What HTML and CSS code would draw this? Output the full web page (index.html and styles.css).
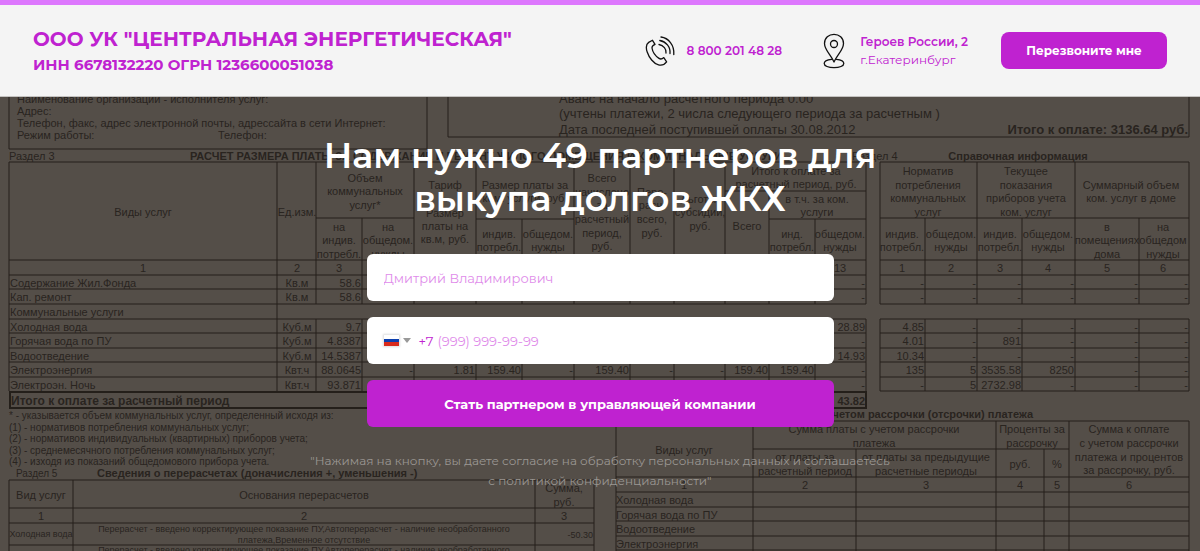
FILE: index.html
```html
<!DOCTYPE html>
<html lang="ru">
<head>
    <meta charset="UTF-8">
    <meta name="viewport" content="width=device-width, initial-scale=1.0">
    <title>ООО УК "Центральная Энергетическая"</title>
    <link rel="stylesheet" href="styles.css">
</head>
<body>
    <header class="header">
        <div class="brand">
            <p class="brand-name">ООО УК "ЦЕНТРАЛЬНАЯ ЭНЕРГЕТИЧЕСКАЯ"</p>
            <p class="brand-info">ИНН 6678132220 ОГРН 1236600051038</p>
        </div>
        <div class="contacts">
            <a class="contact" href="tel:88002014828">
                <svg class="icon-phone" viewBox="0 0 30 30" aria-hidden="true">
                    <path d="M7.500 4.300 L3.700 6.400 C1.400 8 0.700 11.500 2.200 16 C4 21.500 8.500 27.500 13.500 28.900 C16.500 29.700 19.800 28.300 21.600 25.900 L18.800 21.600 C17.500 22.800 15.500 23.400 14 22.400 C10.500 20 7.500 15.500 7 12 C6.900 10.500 8.300 9.200 10 8.400 Z"/>
                    <path d="M16 1 C23.500 2 29.500 9 28.800 18.500 M14.800 4.500 C21 5.500 25.600 11 25 17.500 M14 8.500 C18.500 9.300 21.600 13 21 17"/>
                </svg>
                <b>8 800 201 48 28</b>
            </a>
            <div class="contact">
                <svg class="icon-pin" viewBox="0 0 22 36" aria-hidden="true">
                    <path d="M11 29 C8 22 1.500 17 1.500 10.500 C1.500 5 5.800 1.300 11 1.300 C16.200 1.300 20.500 5 20.500 10.500 C20.500 17 14 22 11 29 Z"/>
                    <circle cx="11" cy="11" r="3.500"/>
                    <path d="M8.600 26.300 C4 26.700 1.200 28.300 1.200 30.400 C1.200 32.900 5.300 34.700 11 34.700 C16.700 34.700 20.800 32.900 20.800 30.400 C20.800 28.300 18 26.700 13.400 26.300"/>
                </svg>
                <p class="address"><b>Героев России, 2</b><br>г.Екатеринбург</p>
            </div>
            <button class="call-button" type="button">Перезвоните мне</button>
        </div>
    </header>

    <main class="hero">
        <!-- Фон: квитанция за ЖКХ -->
        <svg class="bill" viewBox="0 97 1200 454" preserveAspectRatio="xMidYMin slice" aria-hidden="true">
            <g class="lines">
                <!-- шапка -->
                <path d="M9 97V149H427V97 M448 97V137H1189V97"/>
                <!-- раздел 3 -->
                <path d="M9 162H866 M316 218H414 M476 219H574 M725 191H866 M769 219H866 M9 260H866 M9 275H866 M9 289H866 M9 304H866 M9 319H866 M9 333H866 M9 348H866 M9 362H866 M9 377H866"/>
                <path d="M9 162V391 M277 162V391 M316 162V304 M316 319V391 M362 218V304 M362 319V391 M414 162V304 M414 319V391 M476 162V304 M476 319V391 M522 219V304 M522 319V391 M574 162V304 M574 319V391 M630 162V304 M630 319V391 M674 162V304 M674 319V391 M725 162V304 M725 319V391 M769 191V304 M769 319V391 M815 219V304 M815 319V391 M866 162V304 M866 319V391"/>
                <!-- раздел 4 -->
                <path d="M880 162H1189 M880 218H1189 M880 260H1189 M880 275H1189 M880 289H1189 M880 304H1189 M880 319H1189 M880 333H1189 M880 348H1189 M880 362H1189 M880 377H1189 M880 391H1189"/>
                <path d="M880 162V304 M880 319V391 M925 218V304 M925 319V391 M977 162V304 M977 319V391 M1022 218V304 M1022 319V391 M1075 162V304 M1075 319V391 M1139 218V304 M1139 319V391 M1189 162V304 M1189 319V391"/>
                <!-- раздел 5 -->
                <path d="M9 551V480H594V551 M9 508H594 M9 523H594 M9 545H594 M73 480V551 M535 480V551"/>
                <!-- рассрочка -->
                <path d="M616 551V421H1189V551 M753 449H1069 M616 477H1189 M616 492H1189 M616 507H1189 M616 521H1189 M616 536H1189 M616 550H1189 M753 421V551 M856 449V551 M996 421V551 M1044 449V551 M1069 421V551"/>
                <rect class="total" x="10" y="392" width="856" height="16"/>
            </g>

            <g class="t11">
                <text x="17" y="103">Наименование организации - исполнителя услуг:</text>
                <text x="17" y="115">Адрес:</text>
                <text x="17" y="127">Телефон, факс, адрес электронной почты, адрессайта в сети Интернет:</text>
                <text x="17" y="139">Режим работы:</text>
                <text x="218" y="139">Телефон:</text>
                <text x="9" y="160">Раздел 3</text>
                <text x="852" y="160">Раздел 4</text>
                <text class="b" x="190" y="160">РАСЧЕТ РАЗМЕРА ПЛАТЫ ЗА СОДЕРЖАНИЕ И РЕМОНТ ЖИЛОГО ПОМЕЩЕНИЯ И КОММУНАЛЬНЫЕ УСЛУГИ</text>
                <text class="b mid" x="1018" y="160">Справочная информация</text>
            </g>
            <g class="t13">
                <text x="559" y="103">Аванс на начало расчетного периода 0.00</text>
                <text x="559" y="118">(учтены платежи, 2 числа следующего периода за расчетным )</text>
                <text x="559" y="134">Дата последней поступившей оплаты 30.08.2012</text>
                <text class="b end" x="1188" y="134">Итого к оплате: 3136.64 руб.</text>
            </g>

            <g class="t11 mid">
                <text x="143" y="216">Виды услуг</text>
                <text x="297" y="216">Ед.изм.</text>
                <text x="365" y="182">Объем</text><text x="365" y="195">коммунальных</text><text x="365" y="209">услуг*</text>
                <text x="339" y="231">на</text><text x="339" y="244">индив.</text><text x="339" y="258">потребл.</text>
                <text x="388" y="231">на</text><text x="388" y="244">общедом.</text><text x="388" y="258">нужды</text>
                <text x="445" y="189">Тариф</text><text x="445" y="217">Размер</text><text x="445" y="230">платы на</text><text x="445" y="243">кв.м, руб.</text>
                <text x="525" y="189">Размер платы за</text><text x="525" y="202">ком. услуги, руб.</text>
                <text x="499" y="238">индив.</text><text x="499" y="251">потребл.</text>
                <text x="548" y="238">общедом.</text><text x="548" y="251">нужды</text>
                <text x="602" y="182">Всего</text><text x="602" y="196">начислено</text><text x="602" y="209">за</text><text x="602" y="223">расчетный</text><text x="602" y="237">период,</text><text x="602" y="250">руб.</text>
                <text x="652" y="196">Пере-</text><text x="652" y="209">расч.</text><text x="652" y="223">всего,</text><text x="652" y="237">руб.</text>
                <text x="700" y="203">Льготы,</text><text x="700" y="216">субсидии,</text><text x="700" y="230">руб.</text>
                <text x="796" y="175">Итого к оплате за</text><text x="796" y="188">расчетный период, руб.</text>
                <text x="747" y="230">Всего</text>
                <text x="817" y="203">в т.ч. за ком.</text><text x="817" y="216">услуги</text>
                <text x="792" y="238">инд.</text><text x="792" y="251">потребл.</text>
                <text x="840" y="238">общедом.</text><text x="840" y="251">нужды</text>
                <text x="143" y="272">1</text><text x="297" y="272">2</text><text x="339" y="272">3</text><text x="840" y="272">13</text>

                <text x="928" y="175">Норматив</text><text x="928" y="189">потребления</text><text x="928" y="202">коммунальных</text><text x="928" y="216">услуг</text>
                <text x="1026" y="175">Текущее</text><text x="1026" y="189">показания</text><text x="1026" y="202">приборов учета</text><text x="1026" y="216">ком. услуг</text>
                <text x="1131" y="189">Суммарный объем</text><text x="1131" y="202">ком. услуг в доме</text>
                <text x="902" y="238">индив.</text><text x="902" y="251">потребл.</text>
                <text x="951" y="238">общедом.</text><text x="951" y="251">нужды</text>
                <text x="1000" y="238">индив.</text><text x="1000" y="251">потребл.</text>
                <text x="1048" y="238">общедом.</text><text x="1048" y="251">нужды</text>
                <text x="1107" y="231">в</text><text x="1107" y="244">помещениях</text><text x="1107" y="258">дома</text>
                <text x="1163" y="231">на</text><text x="1163" y="244">общедом</text><text x="1163" y="258">нужды</text>
                <text x="902" y="272">1</text><text x="951" y="272">2</text><text x="1000" y="272">3</text><text x="1048" y="272">4</text><text x="1107" y="272">5</text><text x="1163" y="272">6</text>

                <text x="297" y="287">Кв.м</text><text x="297" y="301">Кв.м</text><text x="297" y="331">Куб.м</text><text x="297" y="345">Куб.м</text><text x="297" y="360">Куб.м</text><text x="297" y="374">Квт.ч</text><text x="297" y="389">Квт.ч</text>
            </g>

            <g class="t11">
                <text x="10" y="287">Содержание Жил.Фонда</text>
                <text x="10" y="301">Кап. ремонт</text>
                <text x="10" y="316">Коммунальные услуги</text>
                <text x="10" y="331">Холодная вода</text>
                <text x="10" y="345">Горячая вода по ПУ</text>
                <text x="10" y="360">Водоотведение</text>
                <text x="10" y="374">Электроэнергия</text>
                <text x="10" y="389">Электроэн. Ночь</text>
            </g>
            <text class="t12 b" x="11" y="405">Итого к оплате за расчетный период</text>

            <g class="t11 end">
                <text x="361" y="287">58.6</text><text x="361" y="301">58.6</text><text x="361" y="331">9.7</text><text x="361" y="345">4.8387</text><text x="361" y="360">14.5387</text><text x="361" y="374">88.0645</text><text x="361" y="389">93.871</text>
                <text x="475" y="301">7.20</text><text x="521" y="301">219.86</text><text x="629" y="301">219.86</text><text x="768" y="301">219.86</text><text x="814" y="301">219.86</text>
                <text x="413" y="374">-</text><text x="475" y="374">1.81</text><text x="521" y="374">159.40</text><text x="573" y="374">-</text><text x="629" y="374">159.40</text><text x="673" y="374">-</text><text x="724" y="374">-</text><text x="768" y="374">159.40</text><text x="814" y="374">159.40</text>
                <text x="865" y="287">-</text><text x="865" y="301">-</text><text x="865" y="331">28.89</text><text x="865" y="345">-</text><text x="865" y="360">14.93</text><text x="865" y="374">-</text><text x="865" y="389">-</text>
                <text class="b" x="865" y="405">43.82</text>

                <text x="924" y="287">-</text><text x="976" y="287">-</text><text x="1021" y="287">-</text><text x="1074" y="287">-</text><text x="1138" y="287">-</text><text x="1188" y="287">-</text>
                <text x="924" y="301">-</text><text x="976" y="301">-</text><text x="1021" y="301">-</text><text x="1074" y="301">-</text><text x="1138" y="301">-</text><text x="1188" y="301">-</text>
                <text x="924" y="331">4.85</text><text x="976" y="331">-</text><text x="1021" y="331">-</text><text x="1074" y="331">-</text><text x="1138" y="331">-</text><text x="1188" y="331">-</text>
                <text x="924" y="345">4.01</text><text x="976" y="345">-</text><text x="1021" y="345">891</text><text x="1074" y="345">-</text><text x="1138" y="345">-</text><text x="1188" y="345">-</text>
                <text x="924" y="360">10.34</text><text x="976" y="360">-</text><text x="1021" y="360">-</text><text x="1074" y="360">-</text><text x="1138" y="360">-</text><text x="1188" y="360">-</text>
                <text x="924" y="374">135</text><text x="976" y="374">5</text><text x="1021" y="374">3535.58</text><text x="1074" y="374">8250</text><text x="1138" y="374">-</text><text x="1188" y="374">-</text>
                <text x="924" y="389">-</text><text x="976" y="389">5</text><text x="1021" y="389">2732.98</text><text x="1074" y="389">-</text><text x="1138" y="389">-</text><text x="1188" y="389">-</text>
            </g>

            <g class="t10">
                <text x="9" y="419">* - указывается объем коммунальных услуг, определенный исходя из:</text>
                <text x="9" y="431">(1) - нормативов потребления коммунальных услуг;</text>
                <text x="9" y="442">(2) - нормативов индивидуальных (квартирных) приборов учета;</text>
                <text x="9" y="454">(3) - среднемесячного потребления коммунальных услуг;</text>
                <text x="9" y="465">(4) - изходя из показаний общедомового прибора учета.</text>
                <text x="16" y="477">Раздел 5</text>
            </g>
            <text class="t11 b" x="97" y="477">Сведения о перерасчетах (доначисления +, уменьшения -)</text>
            <g class="t11 mid">
                <text x="41" y="499">Вид услуг</text><text x="304" y="499">Основания перерасчетов</text>
                <text x="564" y="492">Сумма,</text><text x="564" y="506">руб.</text>
                <text x="41" y="520">1</text><text x="304" y="520">2</text><text x="564" y="520">3</text>
            </g>
            <g class="t9 mid">
                <text x="41" y="537">Холодная вода</text>
                <text x="304" y="532">Перерасчет - введено корректирующее показание ПУ,Автоперерасчет - наличие необработанного</text>
                <text x="304" y="543">платежа,Временное отсутствие</text>
                <text x="304" y="553">Перерасчет - введено корректирующее показание ПУ,Автоперерасчет - наличие необработанного</text>
                <text class="end" x="593" y="538">-50.30</text>
            </g>

            <text class="t11 b end" x="1033" y="418">Расчет суммы оплаты с учетом рассрочки (отсрочки) платежа</text>
            <g class="t11 mid">
                <text x="684" y="454">Виды услуг</text>
                <text x="874" y="433">Сумма платы с учетом рассрочки</text><text x="874" y="447">платежа</text>
                <text x="805" y="461">от платы за</text><text x="805" y="475">расчетный период</text>
                <text x="926" y="461">от платы за предыдущие</text><text x="926" y="475">расчетные периоды</text>
                <text x="1032" y="433">Проценты за</text><text x="1032" y="447">рассрочку</text>
                <text x="1020" y="468">руб.</text><text x="1057" y="468">%</text>
                <text x="1129" y="433">Сумма к оплате</text><text x="1129" y="447">с учетом рассрочки</text><text x="1129" y="461">платежа и процентов</text><text x="1129" y="474">за рассрочку, руб.</text>
                <text x="684" y="489">1</text><text x="805" y="489">2</text><text x="926" y="489">3</text><text x="1020" y="489">4</text><text x="1057" y="489">5</text><text x="1129" y="489">6</text>
            </g>
            <g class="t11">
                <text x="616" y="504">Холодная вода</text>
                <text x="616" y="519">Горячая вода по ПУ</text>
                <text x="616" y="533">Водоотведение</text>
                <text x="616" y="548">Электроэнергия</text>
            </g>
        </svg>

        <div class="hero-content">
            <h1>Нам нужно 49 партнеров для<br>выкупа долгов ЖКХ</h1>
            <form class="form">
                <input class="field" type="text" name="name" placeholder="Дмитрий Владимирович" aria-label="Имя">
                <div class="field phone-field">
                    <button class="country" type="button" aria-label="Выбрать страну">
                        <span class="flag"></span>
                        <span class="arrow"></span>
                    </button>
                    <label for="phone">+7</label>
                    <input id="phone" type="tel" name="phone" placeholder="(999) 999-99-99">
                </div>
                <button class="submit" type="submit">Стать партнером в управляющей компании</button>
            </form>
            <p class="note">"Нажимая на кнопку, вы даете согласие на обработку персональных данных и соглашаетесь<br>с политикой конфиденциальности"</p>
        </div>
    </main>
</body>
</html>
```
FILE: styles.css
```css
* {
    box-sizing: border-box;
}
body {
    margin: 0;
    min-height: 100vh;
    display: flex;
    flex-direction: column;
    font-family: Montserrat, Inter, "Open Sans", sans-serif;
    color: #bf22d0;
}
p, h1 {
    margin: 0;
}
button, input {
    font-family: inherit;
}

/* Шапка */
.header {
    display: flex;
    justify-content: space-between;
    align-items: center;
    padding: 0 33px;
    min-height: 97px;
    background-color: #f4f4f4;
    border-top: 5px solid #dd77fd;
    border-bottom: 1px solid #c4c2c0;
}
.brand-name {
    font-size: 20px;
    font-weight: 700;
    line-height: 28px;
}
.brand-info {
    font-size: 15px;
    font-weight: 700;
    line-height: 24px;
}
.contacts {
    display: flex;
    align-items: center;
    gap: 33px;
}
.contact {
    display: flex;
    align-items: center;
    gap: 12px;
    font-size: 12px;
    line-height: 18px;
    color: inherit;
    text-decoration: none;
}
.contact b {
    font-weight: 600;
}
.contact + .contact {
    margin-left: 8px;
    gap: 15px;
}
.contact svg {
    fill: none;
    stroke: #111;
    stroke-width: 1.3;
    stroke-linejoin: round;
    stroke-linecap: round;
}
.icon-phone {
    width: 30px;
    height: 30px;
}
.icon-pin {
    width: 22px;
    height: 36px;
}
.call-button {
    width: 166px;
    height: 37px;
    border: none;
    border-radius: 8px;
    background-color: #bf22d0;
    color: #fff;
    font-size: 12px;
    font-weight: 700;
    cursor: pointer;
}

/* Первый экран */
.hero {
    position: relative;
    flex: 1;
    overflow: hidden;
    background-color: #544e48;
}
.hero-content {
    position: relative;
    display: flex;
    flex-direction: column;
    align-items: center;
    padding: 37px 20px 40px;
    text-align: center;
}
h1 {
    color: #fff;
    font-size: 35px;
    font-weight: 600;
    line-height: 43px;
}
.form {
    display: flex;
    flex-direction: column;
    gap: 16px;
    width: 100%;
    max-width: 467px;
    margin-top: 34px;
}
.field {
    width: 100%;
    height: 47px;
    padding: 0 17px;
    border: none;
    border-radius: 6px;
    background-color: #fff;
    font-size: 13px;
    font-weight: 400;
    color: #bf22d0;
}
.field::placeholder, .phone-field input::placeholder {
    color: #e08cea;
    opacity: 1;
}
.phone-field {
    display: flex;
    align-items: center;
}
.phone-field label {
    margin: 0 4px 0 8px;
}
.phone-field input {
    flex: 1;
    min-width: 0;
    padding: 0;
    border: none;
    background: none;
    font-size: 13px;
    font-weight: 400;
    color: #bf22d0;
}
.country {
    display: flex;
    align-items: center;
    gap: 4px;
    padding: 0;
    border: none;
    background: none;
}
.flag {
    width: 15px;
    height: 11px;
    background: linear-gradient(#fff 33%, #0c3fae 33% 66%, #d92a1c 66%);
    box-shadow: 0 0 2px 1px #ddd;
}
.arrow {
    border: 4px solid transparent;
    border-top: 5px solid #999;
    border-bottom: none;
}
.submit {
    height: 47px;
    border: none;
    border-radius: 6px;
    background-color: #bf22d0;
    color: #fff;
    font-size: 13px;
    font-weight: 700;
    cursor: pointer;
}
.note {
    margin-top: 24px;
    color: #9b9793;
    font-size: 12px;
    font-weight: 400;
    line-height: 20px;
}

/* Квитанция на фоне */
.bill {
    position: absolute;
    top: 0;
    left: 0;
    width: 100%;
    height: 100%;
    font-family: "Liberation Sans", Arial, sans-serif;
    fill: #29241f;
}
.lines {
    fill: none;
    stroke: #241f1a;
    stroke-width: 1;
}
.total {
    stroke-width: 2;
}
.t9 { font-size: 9px; }
.t10 { font-size: 10px; }
.t11 { font-size: 11px; }
.t12 { font-size: 12px; }
.t13 { font-size: 13px; }
.b { font-weight: 700; }
.mid { text-anchor: middle; }
.end { text-anchor: end; }
```
